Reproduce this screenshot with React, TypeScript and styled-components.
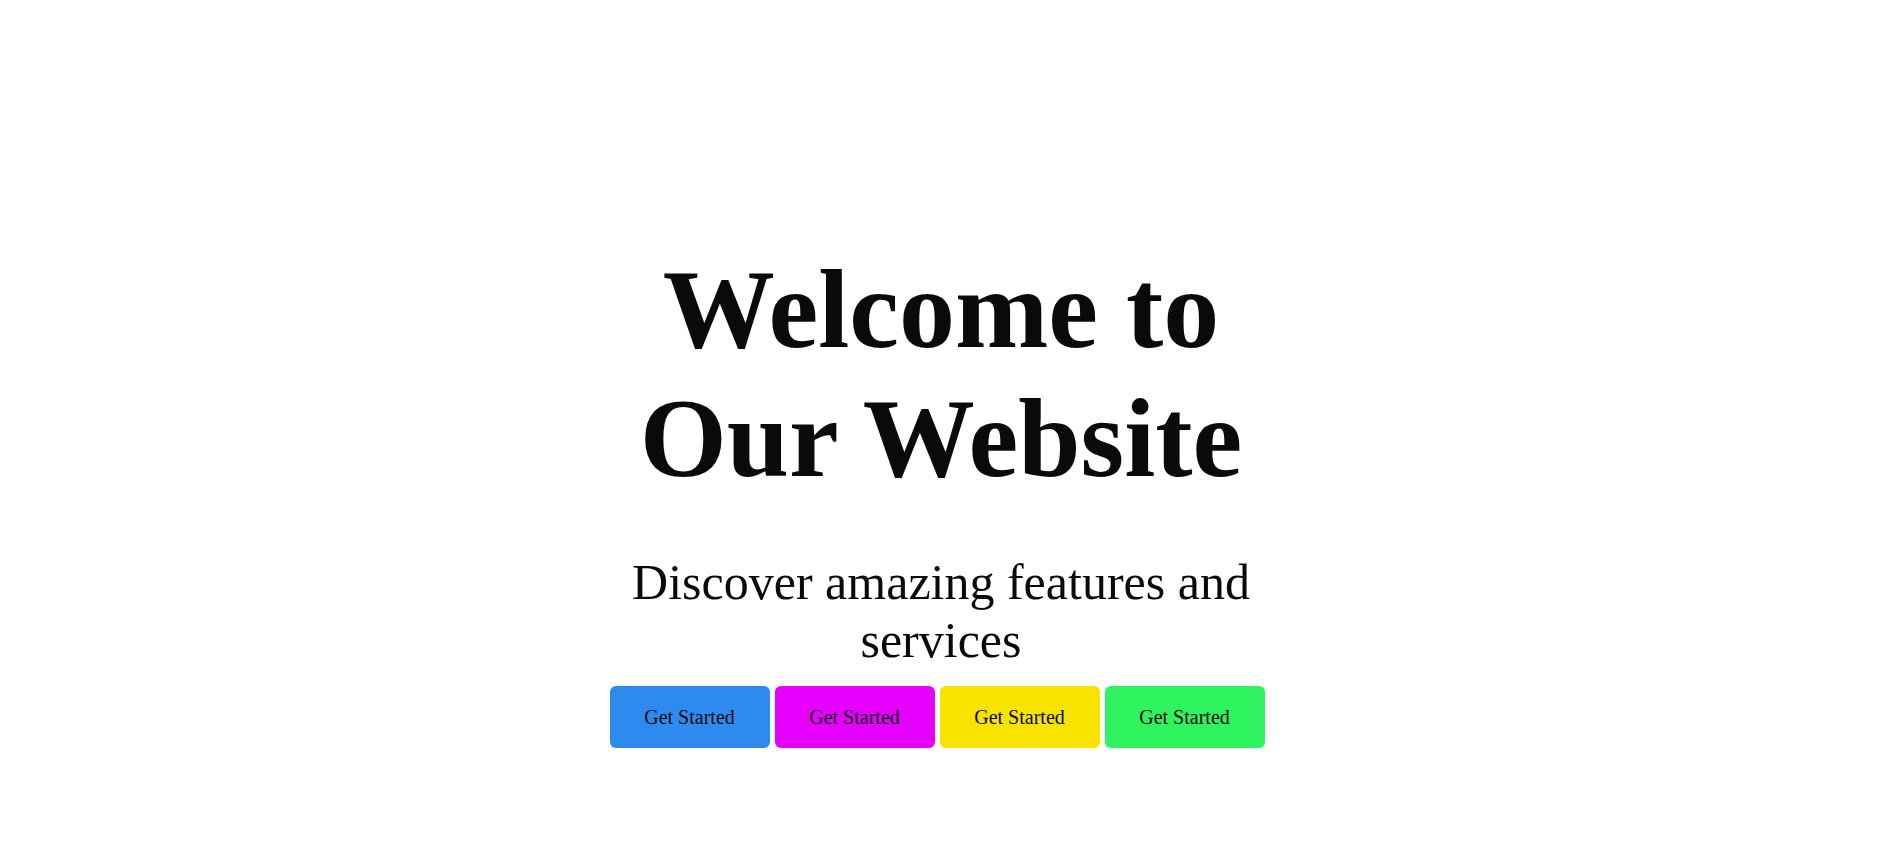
import styled, { createGlobalStyle } from "styled-components";

const GlobalStyle = createGlobalStyle`
  html, body {
    margin: 0;
    padding: 0;
    background: #ffffff;
  }
  body {
    font-family: "Liberation Serif", "Times New Roman", serif;
    color: #0a0a0a;
  }
`;

const buttons = [
  { label: "Get Started", color: "#2f8af0" },
  { label: "Get Started", color: "#e600ff" },
  { label: "Get Started", color: "#f7e200" },
  { label: "Get Started", color: "#2ef25e" },
];

const App = () => {
  return (
    <>
      <GlobalStyle />
      <Hero>
        <Content>
          <Title>Welcome to Our Website</Title>
          <Subtitle>Discover amazing features and services</Subtitle>
          <ButtonRow>
            {buttons.map((b, i) => (
              <CtaButton key={i} $bg={b.color}>
                {b.label}
              </CtaButton>
            ))}
          </ButtonRow>
        </Content>
      </Hero>
    </>
  );
};

const Hero = styled.section`
  display: flex;
  justify-content: center;
  padding-top: 245px;
  min-height: 861px;
  box-sizing: border-box;
`;

const Content = styled.div`
  width: 700px;
  display: flex;
  flex-direction: column;
  align-items: center;
  text-align: center;
`;

const Title = styled.h1`
  margin: 0;
  font-size: 112px;
  font-weight: 700;
  line-height: normal;
  color: #0a0a0a;
`;

const Subtitle = styled.p`
  margin: 50px 0 0;
  font-size: 50px;
  font-weight: 400;
  line-height: normal;
  color: #0a0a0a;
`;

const ButtonRow = styled.div`
  display: flex;
  justify-content: center;
  gap: 5px;
  margin-top: 17px;
  margin-left: -8px;
`;

const CtaButton = styled.button<{ $bg: string }>`
  width: 160px;
  height: 62px;
  border: none;
  border-radius: 6px;
  background: ${(p) => p.$bg};
  font-family: "Liberation Serif", "Times New Roman", serif;
  font-size: 20px;
  color: #0a0a0a;
  cursor: pointer;
  padding: 0;
`;

export default App;
